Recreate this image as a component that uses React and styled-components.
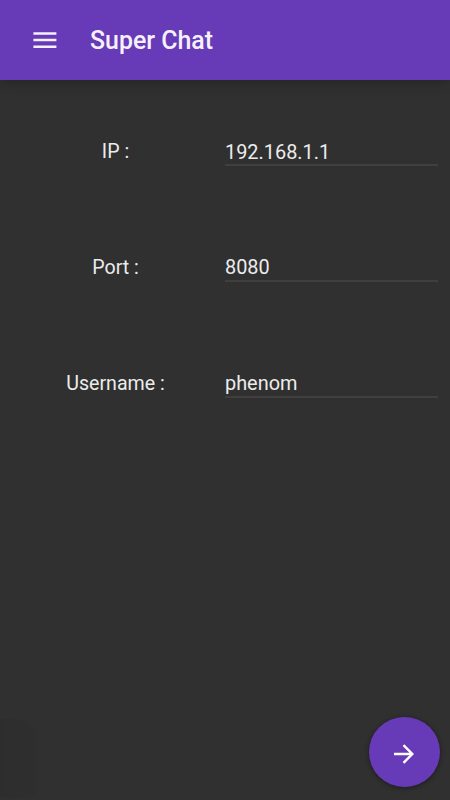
import React from 'react';
import styled, { createGlobalStyle } from 'styled-components';

const GlobalStyle = createGlobalStyle`
  * { box-sizing: border-box; }
  html, body { margin: 0; background: #303030; overflow: hidden; }
  body, input, button { font-family: Roboto, "Liberation Sans", sans-serif; }
`;

const Screen = styled.main`
  position: relative;
  display: flex;
  flex-direction: column;
  width: 450px;
  height: 800px;
  overflow: hidden;
  background: #303030;
  color: #ececec;
`;

const Toolbar = styled.header`
  display: flex;
  align-items: center;
  flex: 0 0 80px;
  padding-left: 33px;
  gap: 33px;
  background: #673ab7;
  box-shadow: 0 4px 12px -2px rgba(0, 0, 0, 0.28);
`;

const MenuButton = styled.button`
  display: flex;
  padding: 0;
  border: 0;
  background: none;
  color: #f5f1fa;
`;

const Title = styled.h1`
  margin: 0;
  padding-top: 2px;
  color: #f5f1fa;
  font-size: 24.9px;
  font-weight: 500;
  line-height: 32px;
`;

const Form = styled.form`
  display: flex;
  flex-direction: column;
  gap: 86px;
  padding: 56px 12px 0 5px;
`;

const Field = styled.div`
  display: grid;
  grid-template-columns: 220px 212.5px;
  height: 30px;
`;

const Label = styled.label`
  padding-left: 1px;
  text-align: center;
  font-size: 19.6px;
  line-height: 31px;
`;

const Input = styled.input`
  height: 30px;
  padding: ${({ $top }) => $top}px 0 0;
  border: 0;
  border-bottom: 2px solid #3f3f3f;
  border-radius: 0;
  outline: 0;
  background: transparent;
  color: #ececec;
  font-size: 19.9px;
`;

const NextButton = styled.button`
  position: absolute;
  right: 10.5px;
  bottom: 12.7px;
  display: flex;
  align-items: center;
  justify-content: center;
  width: 70.5px;
  height: 70.5px;
  padding: 3px 1px 0 0;
  border: 0;
  border-radius: 50%;
  background: #673ab7;
  color: #fff;
  box-shadow: 0 1px 5px rgba(0, 0, 0, 0.45);
`;

const EdgeShade = styled.div`
  position: absolute;
  left: 0;
  bottom: 2px;
  width: 39px;
  height: 79px;
  border-radius: 0 24px 12px 0;
  background: linear-gradient(to right, #2d2d2d, #2e2e2e 20%, #2f2f2f);
`;

const fields = [
  { id: 'ip', label: 'IP :', value: '192.168.1.1', top: 4 },
  { id: 'port', label: 'Port :', value: '8080', top: 2 },
  { id: 'username', label: 'Username :', value: 'phenom', top: 2 },
];

export default function App() {
  return (
    <>
      <GlobalStyle />
      <Screen>
        <Toolbar>
          <MenuButton aria-label="Menu">
            <svg width="24" height="16" viewBox="0 0 24 16" fill="currentColor">
              <path d="M.4.2h23v2.5H.4zM.4 6.85h23v2.5H.4zM.4 13.4h23v2.5H.4z" />
            </svg>
          </MenuButton>
          <Title>Super Chat</Title>
        </Toolbar>
        <Form>
          {fields.map(({ id, label, value, top }) => (
            <Field key={id}>
              <Label htmlFor={id}>{label}</Label>
              <Input id={id} defaultValue={value} $top={top} />
            </Field>
          ))}
        </Form>
        <EdgeShade />
        <NextButton aria-label="Continue">
          <svg
            width="22"
            height="22"
            viewBox="0 0 22 22"
            fill="none"
            stroke="currentColor"
            strokeWidth="2.4"
          >
            <path d="M1 11h18M10.5 2.2l8.8 8.8-8.8 8.8" />
          </svg>
        </NextButton>
      </Screen>
    </>
  );
}
